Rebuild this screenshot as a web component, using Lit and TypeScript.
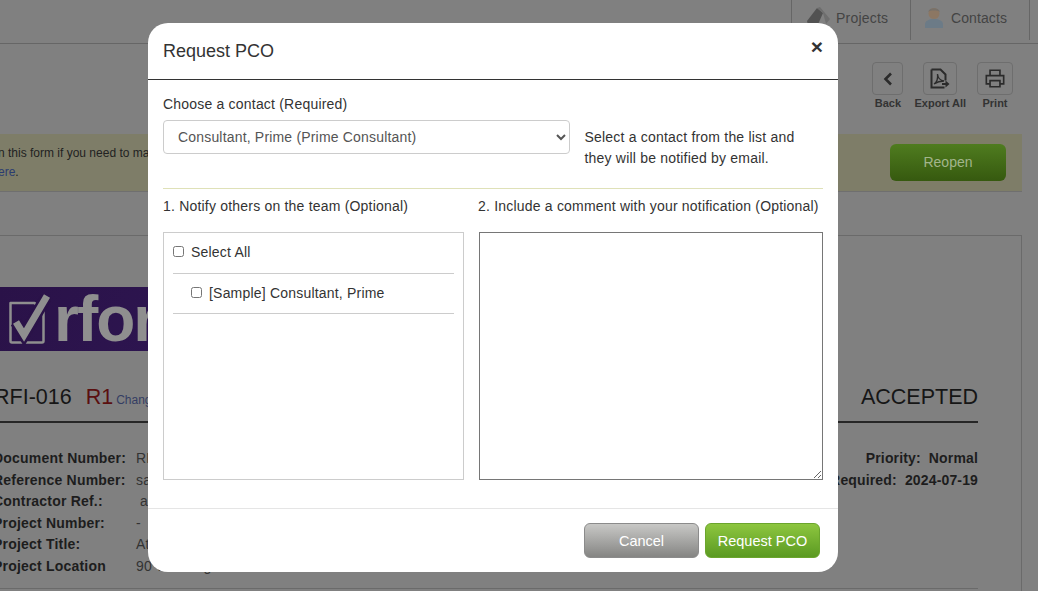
import { LitElement, html, css, svg } from "lit";
import { customElement } from "lit/decorators.js";

const printIcon = svg`<path d="M6 8V1.500h12V8M6 18H1.500V8h21v10H18M6 14h12v7.500H6z" fill="none" stroke="#2b2b2b" stroke-width="2"/>`;
const pdfIcon = svg`<path d="M1.500 1.500h9l5 5v6M1.500 1.500v18h13" fill="none" stroke="#2b2b2b" stroke-width="2"/><path d="M4 16c2.500-1.500 4-5.500 3.500-10 .5 4 3 6.500 6.500 7-3 0-7 1-10 3z" fill="none" stroke="#2b2b2b" stroke-width="1.300"/><path d="M12 15h3.500v-2.500l4 3.500-4 3.500V17H12z" fill="#2b2b2b"/>`;

@customElement("app-root")
export class AppRoot extends LitElement {
  static styles = css`
    :host { display: block; position: relative; width: 1038px; height: 591px; overflow: hidden; background: #808080; font-family: "Liberation Sans", Arial, sans-serif; color: #1d1d1d; }
    .page { display: flex; flex-direction: column; height: 591px; }
    .topbar { height: 44px; flex: none; box-sizing: border-box; border-bottom: 1px solid #666; display: flex; justify-content: flex-end; padding-right: 8px; }
    .tab { width: 119px; height: 40px; box-sizing: border-box; border-left: 1px solid #666; display: flex; align-items: center; font-size: 14px; letter-spacing: .2px; color: #444; padding: 0 0 4px 14px; gap: 6px; }
    .tab:last-child { width: 120px; border-right: 1px solid #666; padding-left: 13px; gap: 7px; letter-spacing: .1px; }
    .tools { height: 90px; flex: none; box-sizing: border-box; display: flex; justify-content: flex-end; gap: 11px; padding: 18px 25px 0 0; }
    .tool { display: flex; flex-direction: column; align-items: center; gap: 2px; font-size: 11px; font-weight: bold; color: #333; }
    .tool-btn { box-sizing: border-box; height: 33px; border: 1px solid #6e6e6e; border-radius: 4px; display: flex; align-items: center; justify-content: center; }
    .w-back { width: 31px; }
    .w-export { width: 34px; }
    .w-print { width: 36px; }
    .banner { height: 58px; flex: none; box-sizing: border-box; width: 1022px; background: #7e7d68; border-bottom: 1px solid #6f6f6f; display: flex; align-items: center; justify-content: space-between; padding-right: 16px; font-size: 12px; line-height: 19px; color: #222; }
    .banner-text { margin-left: -2px; white-space: nowrap; }
    .banner a { color: #2b3c70; }
    .reopen { width: 116px; height: 37px; border-radius: 6px; background: linear-gradient(#4f7c1f, #36590f); color: #a2b58c; font-size: 14px; display: flex; align-items: center; justify-content: center; }
    .panel { margin-top: 43px; width: 1022px; flex: 1; box-sizing: border-box; border-top: 1px solid #6a6a6a; border-right: 1px solid #6a6a6a; position: relative; padding-top: 51px; }
    .logo { height: 64px; width: 170px; background: linear-gradient(120deg, #2a1248, #2d1550); display: flex; align-items: center; padding-left: 9px; box-sizing: border-box; gap: 3px; overflow: hidden; }
    .logo svg { flex: none; }
    .logo span { font-size: 64px; font-weight: bold; color: #8f8f8f; letter-spacing: -2px; line-height: 64px; margin-top: -1px; }
    .title-row { display: flex; justify-content: space-between; align-items: flex-end; margin: 30px 43px 0 -6px; height: 42px; box-sizing: border-box; border-bottom: 2px solid #262626; padding-bottom: 10px; font-size: 21.5px; line-height: 28px; color: #161616; }
    .rev { color: #5a0f0f; margin-left: 14px; }
    .change { font-size: 12px; line-height: 1; color: #343d63; margin-left: 3px; }
    .meta { display: flex; justify-content: space-between; margin: 25px 43px 0 -7px; font-size: 14px; line-height: 21.6px; letter-spacing: .2px; white-space: nowrap; }
    .meta-left { display: grid; grid-template-columns: 143px auto; font-weight: bold; }
    .meta-left span:nth-child(even) { font-weight: normal; color: #333; }
    .meta-right { text-align: right; font-weight: bold; letter-spacing: .15px; }
    .end-rule { position: absolute; left: 0; right: 43px; top: 352px; border-top: 1px solid #6a6a6a; }

    .modal { position: absolute; left: 148px; top: 23px; width: 690px; height: 549px; background: #fff; border-radius: 20px; display: flex; flex-direction: column; color: #333; overflow: hidden; }
    .head { height: 57px; flex: none; box-sizing: border-box; border-bottom: 1px solid #333; display: flex; align-items: center; justify-content: space-between; padding: 0 15px; font-size: 18px; color: #333; }
    .close { font-size: 21px; font-weight: bold; color: #333; margin-top: -8px; }
    .body { flex: 1; box-sizing: border-box; padding: 16px 15px 0; font-size: 14px; letter-spacing: .2px; }
    .label { line-height: 17px; }
    .contact { display: flex; align-items: flex-start; margin-top: 7px; gap: 14.5px; }
    select { width: 407px; height: 34px; box-sizing: border-box; border: 1px solid #ccc; border-radius: 4px; background: #fff; color: #555; font: 14px "Liberation Sans", Arial, sans-serif; padding: 6px 10px; letter-spacing: .18px; }
    .hint { line-height: 21px; margin-top: 7px; }
    .rule { border-top: 1px solid #dfe1b8; margin-top: 19px; }
    .cols { display: grid; grid-template-columns: 301px 344px; column-gap: 15px; margin-top: 9px; }
    .col-label { line-height: 17px; white-space: nowrap; }
    .col-label.shift { margin-left: -1px; }
    .list { box-sizing: border-box; height: 248px; margin-top: 17px; border: 1px solid #ccc; padding: 0 9px; }
    .row { height: 40px; box-sizing: border-box; border-bottom: 1px solid #ccc; display: flex; align-items: center; gap: 7px; padding-bottom: 2px; }
    .row.first { height: 41px; padding-bottom: 3px; }
    .row.sub { padding-left: 18px; }
    input[type="checkbox"] { width: 11px; height: 11px; margin: 0; flex: none; }
    textarea { display: block; box-sizing: border-box; width: 344px; height: 248px; margin: 17px 0 0; border: 1px solid #767676; border-radius: 0; background: #fff; padding: 2px; }
    .foot { height: 64px; flex: none; box-sizing: border-box; border-top: 1px solid #e5e5e5; display: flex; justify-content: flex-end; gap: 6px; padding: 14px 18px 0 0; }
    .btn { width: 115px; height: 35px; box-sizing: border-box; border-radius: 6px; display: flex; align-items: center; justify-content: center; color: #fff; font-size: 14.5px; }
    .cancel { background: linear-gradient(#c8c8c6, #858583); border: 1px solid #8b8b8b; }
    .go { background: linear-gradient(#8dc63f, #5b9a22); border: 1px solid #6ba52d; }
  `;

  render() {
    return html`
      <div class="page">
        <div class="topbar">
          <div class="tab">
            <svg width="24" height="22" viewBox="0 0 24 22"><path d="M1 14 11 1l6 5-7 16H3z" fill="#525252"/><path d="M11 1l3-1 10 12-4 5-3-11z" fill="#6e6e6e"/></svg>
            <span>Projects</span>
          </div>
          <div class="tab">
            <svg width="20" height="22" viewBox="0 0 20 22"><circle cx="10" cy="6.500" r="5.500" fill="#8c7763"/><path d="M4 4.500C6 0 14 0 16 4.500c-3-1.500-9-1.500-12 0z" fill="#77716a"/><path d="M1 21v-4c0-3 4-5 9-5s9 2 9 5v4z" fill="#6c7b87"/></svg>
            <span>Contacts</span>
          </div>
        </div>
        <div class="tools">
          <div class="tool"><div class="tool-btn w-back"><svg width="10" height="14" viewBox="0 0 10 14"><path d="M8 1.500 2.500 7 8 12.500" fill="none" stroke="#2b2b2b" stroke-width="2.600"/></svg></div><span>Back</span></div>
          <div class="tool"><div class="tool-btn w-export"><svg width="20" height="21" viewBox="0 0 20 21">${pdfIcon}</svg></div><span>Export All</span></div>
          <div class="tool"><div class="tool-btn w-print"><svg width="20" height="19" viewBox="0 0 24 23">${printIcon}</svg></div><span>Print</span></div>
        </div>
        <div class="banner">
          <div class="banner-text">n this form if you need to make changes<br /><a>ere</a>.</div>
          <div class="reopen">Reopen</div>
        </div>
        <div class="panel">
          <div class="logo">
            <svg width="42" height="50" viewBox="0 0 42 50"><path d="M1.500 9h24l9 8v30q0 1.500-1.500 1.500H3q-1.500 0-1.500-1.500z" fill="none" stroke="#8f8f8f" stroke-width="2.500" stroke-linejoin="round"/><path d="M7 28l8 13L38 2" fill="none" stroke="#2a1248" stroke-width="12"/><path d="M7 28l8 13L38 2" fill="none" stroke="#8f8f8f" stroke-width="7"/></svg>
            <span>rform</span>
          </div>
          <div class="title-row">
            <div>RFI-016<span class="rev">R1</span><span class="change">Change</span></div>
            <div>ACCEPTED</div>
          </div>
          <div class="meta">
            <div class="meta-left">
              <span>Document Number:</span><span>RFI-016</span>
              <span>Reference Number:</span><span>sample</span>
              <span>Contractor Ref.:</span><span>&nbsp;abc</span>
              <span>Project Number:</span><span>-</span>
              <span>Project Title:</span><span>Atlas</span>
              <span>Project Location</span><span>90 Washington Street</span>
            </div>
            <div class="meta-right">
              <div>Priority:&nbsp; Normal</div>
              <div>Response Required:&nbsp; 2024-07-19</div>
            </div>
          </div>
          <div class="end-rule"></div>
        </div>
      </div>

      <div class="modal">
        <div class="head"><span>Request PCO</span><span class="close">×</span></div>
        <div class="body">
          <div class="label">Choose a contact (Required)</div>
          <div class="contact">
            <select><option>Consultant, Prime (Prime Consultant)</option></select>
            <div class="hint">Select a contact from the list and<br />they will be notified by email.</div>
          </div>
          <div class="rule"></div>
          <div class="cols">
            <div>
              <div class="col-label">1. Notify others on the team (Optional)</div>
              <div class="list">
                <label class="row first"><input type="checkbox" />Select All</label>
                <label class="row sub"><input type="checkbox" />[Sample] Consultant, Prime</label>
              </div>
            </div>
            <div>
              <div class="col-label shift">2. Include a comment with your notification (Optional)</div>
              <textarea></textarea>
            </div>
          </div>
        </div>
        <div class="foot">
          <div class="btn cancel">Cancel</div>
          <div class="btn go">Request PCO</div>
        </div>
      </div>
    `;
  }
}
